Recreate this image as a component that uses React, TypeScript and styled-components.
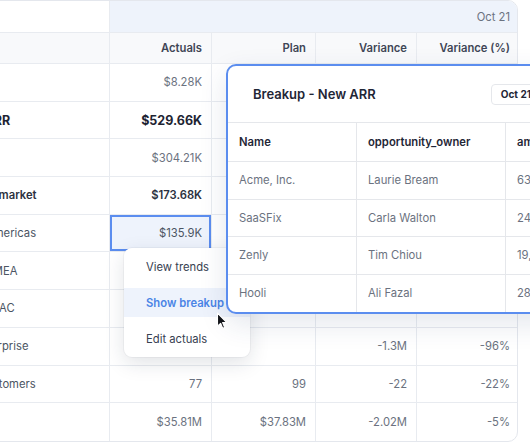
import styled, { createGlobalStyle, css } from "styled-components";

type Tone = "plain" | "total" | "group";

interface SheetRow {
  label: string;
  indent: number;
  tone?: Tone;
  actuals?: string;
  plan?: string;
  variance?: string;
  variancePct?: string;
  selected?: boolean;
}

const COLUMNS = "229px 102px 104px 101px 102px";

const rows: SheetRow[] = [
  { label: "Expansion", indent: 20, actuals: "$8.28K" },
  { label: "New ARR", indent: 73, tone: "total", actuals: "$529.66K" },
  { label: "Renewals", indent: 20, actuals: "$304.21K" },
  { label: "Mid-market", indent: 92, tone: "group", actuals: "$173.68K" },
  { label: "Americas", indent: 105, actuals: "$135.9K", selected: true },
  { label: "EMEA", indent: 105 },
  { label: "APAC", indent: 104 },
  { label: "Enterprise", indent: 93, variance: "-1.3M", variancePct: "-96%" },
  { label: "Customers", indent: 97, actuals: "77", plan: "99", variance: "-22", variancePct: "-22%" },
  { label: "Total", indent: 20, actuals: "$35.81M", plan: "$37.83M", variance: "-2.02M", variancePct: "-5%" },
];

const breakup = [
  { name: "Acme, Inc.", owner: "Laurie Bream", amount: "63,500" },
  { name: "SaaSFix", owner: "Carla Walton", amount: "24,800" },
  { name: "Zenly", owner: "Tim Chiou", amount: "19,200" },
  { name: "Hooli", owner: "Ali Fazal", amount: "28,900" },
];

const GlobalStyle = createGlobalStyle`
  html, body {
    margin: 0;
    padding: 0;
    background: #ffffff;
  }
  body {
    font-family: Inter, "Noto Sans", sans-serif;
    -webkit-font-smoothing: antialiased;
  }
`;

const Stage = styled.div`
  position: relative;
  width: 530px;
  height: 442px;
  overflow: hidden;
`;

const Sheet = styled.div`
  margin-left: -120px;
  width: 638px;
  box-sizing: border-box;
  border: 1px solid #e4e7ed;
  border-radius: 0 10px 10px 0;
  overflow: hidden;
  background: #ffffff;
`;

const Row = styled.div<{ $height: number; $last?: boolean }>`
  display: grid;
  grid-template-columns: ${COLUMNS};
  height: ${({ $height }) => $height}px;
  box-sizing: border-box;
  border-bottom: ${({ $last }) => ($last ? "none" : "1px solid #e8ebf0")};
`;

const Cell = styled.div<{ $last?: boolean; $bg?: string; $span?: number }>`
  display: flex;
  align-items: center;
  justify-content: flex-end;
  padding: 0 9px;
  min-width: 0;
  font-size: 11.25px;
  color: #6b7280;
  white-space: nowrap;
  background: ${({ $bg }) => $bg || "transparent"};
  border-right: ${({ $last }) => ($last ? "none" : "1px solid #e8ebf0")};
  ${({ $span }) =>
    $span &&
    css`
      grid-column: span ${$span};
    `}
`;

const HeadCell = styled(Cell)`
  font-weight: 600;
  color: #3f4656;
  background: #f8f9fb;
`;

const LabelCell = styled(Cell)<{ $indent: number; $tone: Tone }>`
  justify-content: flex-start;
  padding-left: ${({ $indent }) => $indent}px;
  color: #4b5563;
  ${({ $tone }) =>
    $tone === "total" &&
    css`
      font-size: 12.5px;
      font-weight: 700;
      color: #1e2432;
    `}
  ${({ $tone }) =>
    $tone === "group" &&
    css`
      font-weight: 600;
      color: #2b3140;
    `}
`;

const ValueCell = styled(Cell)<{ $tone: Tone; $selected?: boolean }>`
  ${({ $tone }) =>
    $tone === "total" &&
    css`
      font-size: 12.5px;
      font-weight: 700;
      color: #1e2432;
    `}
  ${({ $tone }) =>
    $tone === "group" &&
    css`
      font-weight: 600;
      color: #2b3140;
    `}
  ${({ $selected }) =>
    $selected &&
    css`
      background: #eef3fc;
      color: #4b5563;
      box-shadow: inset 0 0 0 2px #5b8def;
    `}
`;

const Breakup = styled.div`
  position: absolute;
  left: 226px;
  top: 64px;
  width: 340px;
  background: #ffffff;
  border: 2px solid #5b8def;
  border-radius: 10px;
  box-shadow: 0 10px 28px rgba(35, 55, 105, 0.12);
  overflow: hidden;
`;

const BreakupHeader = styled.div`
  display: flex;
  align-items: center;
  height: 56px;
  padding-left: 25px;
  border-bottom: 1px solid #e5e7eb;
`;

const BreakupTitle = styled.span`
  flex: 1;
  font-size: 13px;
  font-weight: 600;
  color: #1f2636;
`;

const PeriodBadge = styled.span`
  margin-right: 27px;
  height: 21px;
  padding: 0 9px;
  display: flex;
  align-items: center;
  box-sizing: border-box;
  border: 1px solid #e5e7eb;
  border-radius: 4px;
  font-size: 10px;
  font-weight: 700;
  color: #1f2636;
`;

const BreakupRow = styled.div<{ $head?: boolean; $last?: boolean }>`
  display: grid;
  grid-template-columns: 129px 149px 1fr;
  height: ${({ $head }) => ($head ? 39 : 37.5)}px;
  box-sizing: border-box;
  border-bottom: ${({ $last }) => ($last ? "none" : "1px solid #e5e7eb")};
`;

const BreakupCell = styled.div<{ $head?: boolean; $last?: boolean }>`
  display: flex;
  align-items: center;
  padding-left: 11px;
  white-space: nowrap;
  font-size: 11.25px;
  font-weight: ${({ $head }) => ($head ? 600 : 400)};
  color: ${({ $head }) => ($head ? "#1f2636" : "#6b7280")};
  border-right: ${({ $last }) => ($last ? "none" : "1px solid #e5e7eb")};
`;

const Menu = styled.div`
  position: absolute;
  left: 124px;
  top: 248px;
  width: 126px;
  padding: 4px 0;
  display: flex;
  flex-direction: column;
  gap: 7px;
  background: #ffffff;
  border-radius: 8px;
  box-shadow: 0 6px 20px rgba(25, 35, 65, 0.13), 0 0 0 1px rgba(20, 30, 60, 0.04);
`;

const MenuItem = styled.div<{ $active?: boolean }>`
  height: 29px;
  padding-left: 22px;
  display: flex;
  align-items: center;
  font-size: 11.25px;
  color: #374151;
  ${({ $active }) =>
    $active &&
    css`
      background: #eef3fc;
      color: #4a84e6;
      font-weight: 600;
    `}
`;

const Pointer = styled.svg`
  position: absolute;
  left: 216px;
  top: 312px;
`;

const App = () => {
  return (
    <>
      <GlobalStyle />
      <Stage>
        <Sheet>
          <Row $height={32}>
            <Cell />
            <Cell $span={4} $last $bg="#eef3fb">
              Oct 21
            </Cell>
          </Row>
          <Row $height={31}>
            <HeadCell />
            <HeadCell>Actuals</HeadCell>
            <HeadCell>Plan</HeadCell>
            <HeadCell>Variance</HeadCell>
            <HeadCell $last>Variance (%)</HeadCell>
          </Row>
          {rows.map((row, index) => {
            const tone = row.tone || "plain";
            return (
              <Row key={row.label} $height={37.7} $last={index === rows.length - 1}>
                <LabelCell $indent={row.indent} $tone={tone}>
                  {row.label}
                </LabelCell>
                <ValueCell $tone={tone} $selected={row.selected}>
                  {row.actuals}
                </ValueCell>
                <ValueCell $tone={tone}>{row.plan}</ValueCell>
                <ValueCell $tone={tone}>{row.variance}</ValueCell>
                <ValueCell $tone={tone} $last>
                  {row.variancePct}
                </ValueCell>
              </Row>
            );
          })}
        </Sheet>

        <Menu>
          <MenuItem>View trends</MenuItem>
          <MenuItem $active>Show breakup</MenuItem>
          <MenuItem>Edit actuals</MenuItem>
        </Menu>

        <Breakup>
          <BreakupHeader>
            <BreakupTitle>Breakup - New ARR</BreakupTitle>
            <PeriodBadge>Oct 21</PeriodBadge>
          </BreakupHeader>
          <BreakupRow $head>
            <BreakupCell $head>Name</BreakupCell>
            <BreakupCell $head>opportunity_owner</BreakupCell>
            <BreakupCell $head $last>
              amount
            </BreakupCell>
          </BreakupRow>
          {breakup.map((deal, index) => (
            <BreakupRow key={deal.name} $last={index === breakup.length - 1}>
              <BreakupCell>{deal.name}</BreakupCell>
              <BreakupCell>{deal.owner}</BreakupCell>
              <BreakupCell $last>{deal.amount}</BreakupCell>
            </BreakupRow>
          ))}
        </Breakup>

        <Pointer width="12" height="18" viewBox="0 0 12 18">
          <path
            d="M1.5 1.2 L1.5 14.2 L4.6 11.3 L6.7 16.2 L8.6 15.4 L6.6 10.6 L10.8 10.6 Z"
            fill="#111318"
            stroke="#ffffff"
            strokeWidth="1.1"
            strokeLinejoin="round"
          />
        </Pointer>
      </Stage>
    </>
  );
};

export default App;
